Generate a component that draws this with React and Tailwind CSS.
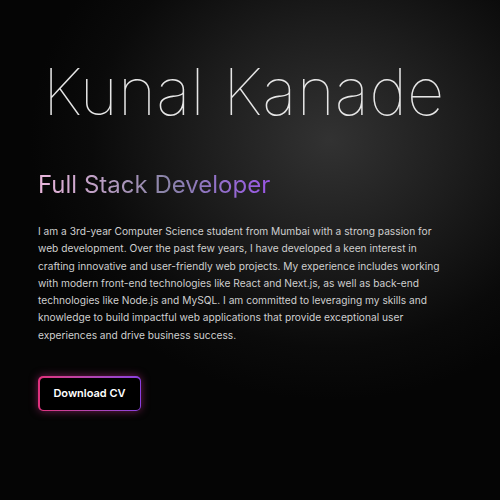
import React from 'react';

export default function App() {
  return (
    <div
      className="w-[500px] h-[500px] overflow-hidden bg-[radial-gradient(ellipse_300px_260px_at_330px_140px,#323232_0%,#1c1c1c_45%,#0a0a0a_80%,#050505_100%)] font-['Inter','Liberation_Sans',sans-serif]"
    >
      <div className="flex flex-col items-start pl-[38px] pt-[52px]">
        {/* Name */}
        <h1 className="ml-[5px] text-[65px] leading-[80px] font-thin tracking-[0.2px] text-[#e6e6e6]">
          Kunal Kanade
        </h1>

        {/* Role */}
        <h2 className="mt-[37px] text-[24px] leading-[32px] font-normal bg-gradient-to-r from-[#eab6dc] via-[#8a84a8] via-55% to-[#9a55e6] bg-clip-text text-transparent">
          Full Stack Developer
        </h2>

        {/* About */}
        <p className="mt-[22px] w-[410px] text-[10.2px] leading-[17.3px] text-[#cfcfcf]">
          I am a 3rd-year Computer Science student from Mumbai with a strong passion for web
          development. Over the past few years, I have developed a keen interest in crafting
          innovative and user-friendly web projects. My experience includes working with modern
          front-end technologies like React and Next.js, as well as back-end technologies like
          Node.js and MySQL. I am committed to leveraging my skills and knowledge to build
          impactful web applications that provide exceptional user experiences and drive business
          success.
        </p>

        {/* Download button */}
        <div className="mt-[32px] p-[1.5px] rounded-[5px] bg-gradient-to-r from-[#e0307c] to-[#8a3fe0] shadow-[0_0_8px_rgba(200,50,140,0.55)]">
          <button className="flex items-center justify-center w-[100px] h-[32px] rounded-[4px] bg-black text-[11px] font-semibold text-white">
            Download CV
          </button>
        </div>
      </div>
    </div>
  );
}
